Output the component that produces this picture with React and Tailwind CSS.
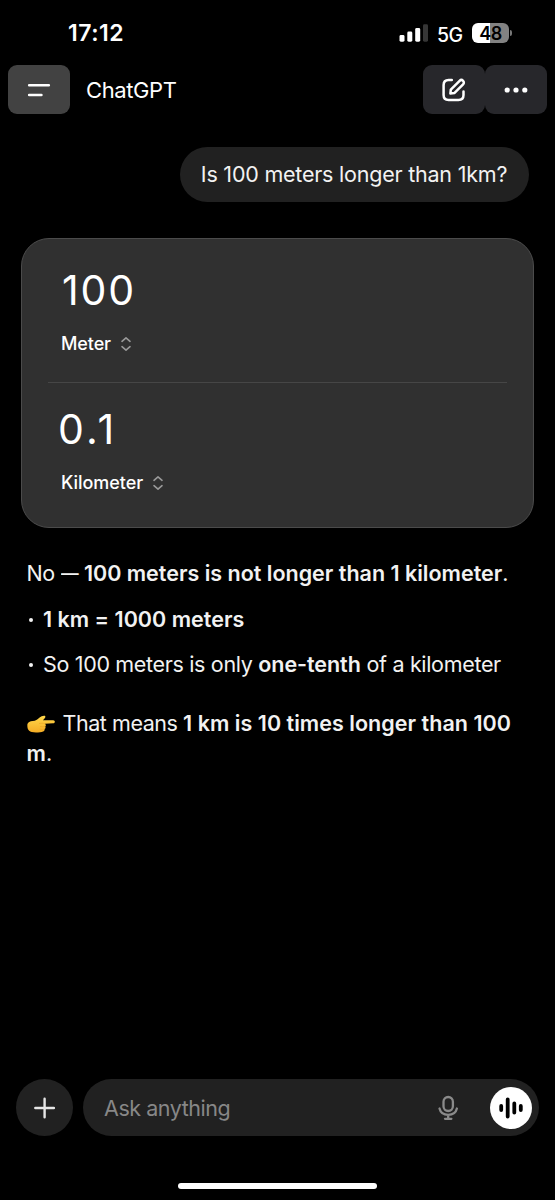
function Selector() {
  return (
    <svg className="-mt-[1px] h-[14px] w-[12px]" viewBox="0 0 12 14" fill="none" stroke="#9a9a9a" strokeWidth="1.6" strokeLinecap="round" strokeLinejoin="round">
      <path d="M2 4.300 6 .9l4 3.400M2 9.700 6 13.100l4-3.400" />
    </svg>
  );
}

function StatusBar() {
  return (
    <div className="flex h-[65px] items-start pr-[43px] pl-[68px]">
      <span className="mt-[18px] text-[23px] leading-[30px] font-semibold tracking-[0.5px]">17:12</span>
      <div className="mt-[22px] ml-auto flex h-[22px] items-center">
        <svg className="h-[20px] w-[29px]" viewBox="0 0 29 20" fill="#fff">
          <rect x="0.5" y="12" width="5" height="6.7" rx="1.4" />
          <rect x="8.3" y="8.6" width="5" height="10.1" rx="1.4" />
          <rect x="16.2" y="5" width="5" height="13.7" rx="1.4" />
          <rect x="24" y="1.2" width="5" height="17.5" rx="1.4" fill="#363636" />
        </svg>
        <span className="mt-[3px] ml-[9px] w-[26px] text-[19.500px] leading-[22px] font-medium tracking-[-0.5px]">5G</span>
        <div className="ml-[9px] flex h-[20px] w-[37px] items-center justify-center rounded-[6px] bg-linear-to-r from-white from-49% to-[#828282] to-49% pt-[1px] text-[18px] leading-[20px] font-semibold tracking-[-0.4px] text-black">48</div>
        <div className="ml-[1px] h-[6px] w-[2px] rounded-r-full bg-[#777]" />
      </div>
    </div>
  );
}

function Header() {
  return (
    <header className="flex h-[49px] items-center px-[8px]">
      <button className="flex h-[49px] w-[62px] items-center justify-center rounded-[9px] bg-[#424242]">
        <svg className="h-[24px] w-[24px]" viewBox="0 0 24 24" stroke="#fff" strokeWidth="2.6" strokeLinecap="round">
          <path d="M2.200 7.200h19.600M2.200 17h12.200" />
        </svg>
      </button>
      <span className="ml-[16px] text-[22px] leading-[30px] tracking-[-0.4px]">ChatGPT</span>
      <button className="ml-auto flex h-[49px] w-[62px] items-center justify-center rounded-[9px] bg-[#27272b]">
        <svg className="h-[26px] w-[26px]" viewBox="0 0 26 26" fill="none" stroke="#fff" strokeWidth="2.5" strokeLinecap="round" strokeLinejoin="round">
          <path d="M10.800 3.100H7.600C4.500 3.100 2.600 4.800 2.600 8v9.900c0 3.200 1.800 5 5 5h9.800c3.300 0 5.100-1.800 5.100-5v-3.300" />
          <path d="m9.400 16.500.4-3.900 8.800-8.800c1-1 2.500-1 3.500 0s1 2.500 0 3.500l-8.800 8.800Z" />
        </svg>
      </button>
      <button className="flex h-[49px] w-[62px] items-center justify-center rounded-[9px] bg-[#27272b]">
        <svg className="h-[6px] w-[24px]" viewBox="0 0 24 6" fill="#fff">
          <circle cx="3.2" cy="3" r="2.6" />
          <circle cx="12" cy="3" r="2.6" />
          <circle cx="20.8" cy="3" r="2.6" />
        </svg>
      </button>
    </header>
  );
}

function Converter() {
  return (
    <section className="mt-[36px] mr-[21px] ml-[21px] flex h-[290px] flex-col rounded-[28px] border border-[#4b4b4b] bg-[#303030] px-[26px]">
      <div className="h-[144px] border-b border-[#464646] pl-[13px]">
        <div className="ml-[1px] pt-[27px] text-[41px] leading-[48px] tracking-[1.800px]">100</div>
        <div className="mt-[18px] flex h-[24px] items-center gap-[9px] text-[18px] leading-[24px] font-medium tracking-[-0.1px]"><span>Meter</span><Selector /></div>
      </div>
      <div className="pl-[13px]">
        <div className="-ml-[3px] pt-[22px] text-[41px] leading-[48px] tracking-[3.200px]">0.1</div>
        <div className="mt-[18px] flex h-[24px] items-center gap-[9px] text-[18px] leading-[24px] font-medium tracking-[-0.050px]"><span>Kilometer</span><Selector /></div>
      </div>
    </section>
  );
}

function PointingHand() {
  return (
    <svg className="mr-[8px] inline-block h-[18px] w-[28px] align-[-2px]" viewBox="0 0 28 18" role="img" aria-label="👉">
      <defs>
        <linearGradient id="skin" x1="0" y1="0" x2="0" y2="1">
          <stop offset="0" stopColor="#ffd84c" />
          <stop offset="1" stopColor="#f5ad25" />
        </linearGradient>
      </defs>
      <path fill="url(#skin)" d="M.4 9.200C.7 7.200 3 6.300 5.800 6c2.700-.3 4.600-1.600 6.500-3.300C14 1.300 16.600.200 17.800.800c1.400.700.200 2.500-1.900 4.500h10.300c2.200 0 2.200 2.900 0 3l-8.300.400c1.300.7 1.200 2.300.2 2.800.8.900.5 2.200-.6 2.600.4 1.200-.2 2.100-1.400 2.300-2.200 1-8.500 1.300-11.300.6C1.800 16.300 0 14.300.4 9.200Z" />
      <path fill="none" stroke="#e09a1e" strokeWidth=".5" strokeLinecap="round" d="M12.500 8.400c1.300-.4 3.800-.3 5.400.3M13.500 11.600c1.600.3 3.300.3 4.600-.1M13 14.200c1.500.3 3 .3 4.300-.1" />
    </svg>
  );
}

function Answer() {
  return (
    <div className="mt-[30px] pr-[26px] pl-[26.500px] text-[21.500px] leading-[30px] tracking-[-0.330px] text-[#f2f2f2]">
      <p className="whitespace-nowrap">No <span className="inline-block w-[17.500px] origin-left scale-x-[0.82]">—</span> <b className="font-semibold tracking-[0px]">100 meters is not longer than 1 kilometer</b>.</p>
      <ul className="mt-[16px] flex flex-col gap-[15px]">
        <li className="flex items-center"><i className="mt-[2px] mr-[10px] ml-[2.500px] size-[4px] rounded-full bg-[#f2f2f2]" /><b className="font-semibold tracking-[0.020px]">1 km = 1000 meters</b></li>
        <li className="flex items-center whitespace-nowrap"><i className="mt-[2px] mr-[10px] ml-[2.500px] size-[4px] rounded-full bg-[#f2f2f2]" /><span>So 100 meters is only <b className="font-semibold tracking-[-0.050px]">one-tenth</b> of a kilometer</span></li>
      </ul>
      <p className="mt-[29px] whitespace-nowrap"><PointingHand /><span className="tracking-[-0.450px]">That means </span><b className="font-semibold tracking-[0.040px]">1 km is 10 times longer than 100<br />m</b>.</p>
    </div>
  );
}

function Composer() {
  return (
    <footer className="mt-auto flex h-[121px] flex-col items-center">
      <div className="flex h-[57px] w-full gap-[10px] pr-[16px] pl-[16px]">
        <button className="flex size-[57px] items-center justify-center rounded-full bg-[#212121]">
          <svg className="size-[22px]" viewBox="0 0 22 22" stroke="#e6e6e6" strokeWidth="2.400" strokeLinecap="round"><path d="M10.600 1.700v18.600M1.300 11h18.600" /></svg>
        </button>
        <div className="flex grow items-center rounded-full bg-[#212121] pr-[7px] pl-[21px]">
          <span className="text-[21.500px] leading-[30px] tracking-[-0.450px] text-[#878787]">Ask anything</span>
          <svg className="ml-auto h-[26px] w-[22px]" viewBox="0 0 22 26" fill="none" stroke="#8a8a8a" strokeWidth="2.300" strokeLinecap="round">
            <rect x="6.500" y="2" width="9.400" height="14" rx="4.700" />
            <path d="M2.500 13.500c.9 3.800 4.200 6.300 8.700 6.300s7.800-2.500 8.700-6.300M11.200 19.800v4M8 23.800h6.400" />
          </svg>
          <span className="ml-[31px] flex size-[42px] items-center justify-center rounded-full bg-white">
            <svg className="h-[22px] w-[26px]" viewBox="0 0 26 22" stroke="#000" strokeWidth="3.800" strokeLinecap="round"><path d="M3.200 9v4M9.700 2.500v17M16.300 6.500v9M22.800 9v4" /></svg>
          </span>
        </div>
      </div>
      <div className="mt-[47px] h-[6px] w-[199px] rounded-full bg-white" />
    </footer>
  );
}

export default function App() {
  return (
    <div className="flex h-[1200px] w-[555px] flex-col overflow-hidden bg-black font-['Inter',sans-serif] text-white">
      <StatusBar />
      <Header />
      <div className="mt-[33px] mr-[26px] flex h-[55px] w-[349px] items-center justify-center self-end rounded-full bg-[#212121] pr-[1px] text-[21.500px] tracking-[-0.220px] whitespace-nowrap text-[#f2f2f2]">
        <span>Is 100 meters longer than 1km?</span>
      </div>
      <Converter />
      <Answer />
      <Composer />
    </div>
  );
}
